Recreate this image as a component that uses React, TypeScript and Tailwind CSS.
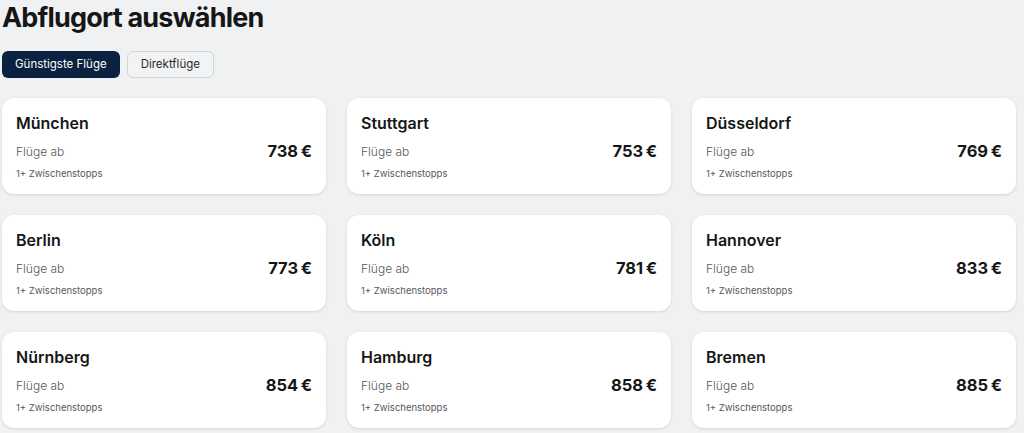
import React from "react";

type Origin = { city: string; price: number };

const origins: Origin[] = [
  { city: "München", price: 738 },
  { city: "Stuttgart", price: 753 },
  { city: "Düsseldorf", price: 769 },
  { city: "Berlin", price: 773 },
  { city: "Köln", price: 781 },
  { city: "Hannover", price: 833 },
  { city: "Nürnberg", price: 854 },
  { city: "Hamburg", price: 858 },
  { city: "Bremen", price: 885 },
];

function OriginCard({ city, price }: Origin) {
  return (
    <div className="h-[96px] rounded-xl bg-white px-[14px] pt-[14px] shadow-[0_1px_3px_rgba(0,0,0,0.12)]">
      <div className="text-[16px] font-semibold leading-[22px] text-[#161616]">{city}</div>
      <div className="mt-[7px] flex items-center justify-between">
        <span className="text-[12px] font-light leading-[22px] text-[#55585b]">Flüge ab</span>
        <span className="-mt-[3px] text-[16.5px] font-bold leading-[22px] tracking-[-0.3px] text-[#161616]">
          {price}{"\u202F"}€
        </span>
      </div>
      <div className="mt-[4px] text-[9.5px] leading-[14px] text-[#55585b]">1+ Zwischenstopps</div>
    </div>
  );
}

export default function App() {
  return (
    <div
      className="min-h-[433px] bg-[#eff1f2] pl-[2px] pr-[8px]"
      style={{ fontFamily: "Inter, 'Noto Sans', sans-serif" }}
    >
      <h1 className="text-[27px] font-bold leading-[36px] tracking-[-0.8px] text-[#161616]">
        Abflugort auswählen
      </h1>

      <div className="mt-[15px] flex gap-[7px]">
        <button
          type="button"
          className="h-[27px] rounded-md bg-[#0a2240] px-[13px] text-[11.5px] font-normal text-white"
        >
          Günstigste Flüge
        </button>
        <button
          type="button"
          className="h-[27px] rounded-md border border-[#d3d6d9] bg-[#f2f3f4] px-[13px] text-[11.5px] font-normal text-[#2a2c2e]"
        >
          Direktflüge
        </button>
      </div>

      <div className="mt-[20px] grid w-[1014px] grid-cols-3 gap-[21px]">
        {origins.map((o) => (
          <OriginCard key={o.city} {...o} />
        ))}
      </div>
    </div>
  );
}
